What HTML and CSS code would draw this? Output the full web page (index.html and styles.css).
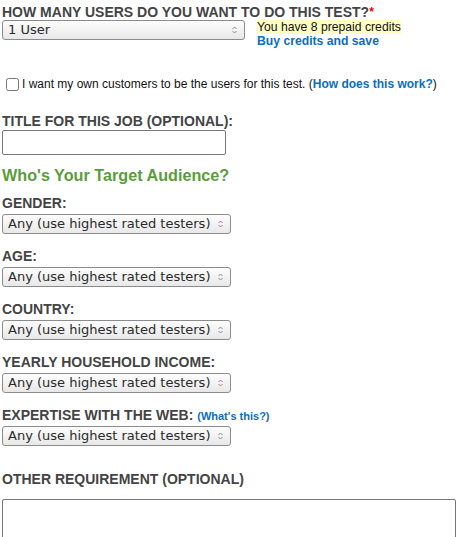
FILE: index.html
```html
<!DOCTYPE html>
<html>
<head>
<meta charset="utf-8">
<link rel="stylesheet" href="styles.css">
</head>
<body>
<div class="form">
  <div class="users-block">
    <div class="label">HOW MANY USERS DO YOU WANT TO DO THIS TEST?<span class="req">*</span></div>
    <div class="users-row">
      <select class="sel users-select"><option>1 User</option></select>
      <div class="credits">
        <span class="prepaid">You have 8 prepaid credits</span>
        <a class="buy" href="#">Buy credits and save</a>
      </div>
    </div>
  </div>

  <label class="own">
    <input type="checkbox" class="cb">
    <span>I want my own customers to be the users for this test. (<a class="link" href="#">How does this work?</a>)</span>
  </label>

  <div class="field title-field">
    <div class="label">TITLE FOR THIS JOB (OPTIONAL):</div>
    <input type="text" class="title-input">
  </div>

  <h2 class="audience">Who's Your Target Audience?</h2>

  <div class="field">
    <div class="label">GENDER:</div>
    <select class="sel aud"><option>Any (use highest rated testers)</option></select>
  </div>
  <div class="field">
    <div class="label">AGE:</div>
    <select class="sel aud"><option>Any (use highest rated testers)</option></select>
  </div>
  <div class="field">
    <div class="label">COUNTRY:</div>
    <select class="sel aud"><option>Any (use highest rated testers)</option></select>
  </div>
  <div class="field">
    <div class="label">YEARLY HOUSEHOLD INCOME:</div>
    <select class="sel aud"><option>Any (use highest rated testers)</option></select>
  </div>
  <div class="field">
    <div class="label">EXPERTISE WITH THE WEB: <a class="small-link" href="#">(What's this?)</a></div>
    <select class="sel aud"><option>Any (use highest rated testers)</option></select>
  </div>

  <div class="field other">
    <div class="label">OTHER REQUIREMENT (OPTIONAL)</div>
    <textarea class="other-text"></textarea>
  </div>
</div>
</body>
</html>
```

FILE: styles.css
```css
html, body {
  margin: 0;
  padding: 0;
  background: #fff;
}
body {
  font-family: "Liberation Sans", Arial, sans-serif;
  color: #222;
  overflow: hidden;
}
.form {
  padding: 4px 0 0 2px;
}
.label {
  font-weight: bold;
  font-size: 14px;
  line-height: 16px;
  color: #444;
}
.req {
  color: #e00;
  font-size: 12px;
  vertical-align: top;
}
.users-row {
  display: flex;
  align-items: flex-start;
  gap: 12px;
}
.sel {
  -webkit-appearance: none;
  appearance: none;
  display: block;
  box-sizing: border-box;
  height: 20px;
  margin: 0;
  padding: 0 20px 0 5px;
  font-family: "DejaVu Sans", sans-serif;
  font-size: 13px;
  line-height: 18px;
  color: #2a2a2a;
  border: 1px solid #8c8c8c;
  border-radius: 3px;
  background-color: #f2f2f2;
  background-image:
    url("data:image/svg+xml;utf8,<svg xmlns='http://www.w3.org/2000/svg' width='5' height='8' viewBox='0 0 5 8'><path d='M0.5 3 L2.5 1 L4.5 3 M0.5 5 L2.5 7 L4.5 5' fill='none' stroke='%23888' stroke-width='1'/></svg>"),
    linear-gradient(#fdfdfd, #e8e8e8);
  background-repeat: no-repeat, no-repeat;
  background-position: right 7px center, 0 0;
  background-size: 5px 8px, 100% 100%;
}
.users-select {
  width: 243px;
}
.aud {
  width: 229px;
}
.credits {
  display: flex;
  flex-direction: column;
  align-items: flex-start;
  font-size: 12.2px;
  line-height: 14px;
  margin-top: 0;
}
.prepaid {
  background: #ffffc4;
  color: #111;
}
.buy {
  color: #0a6fbf;
  font-weight: bold;
  text-decoration: none;
}
.own {
  display: flex;
  align-items: center;
  gap: 3px;
  margin-top: 29px;
  margin-left: 2px;
  font-size: 12px;
  color: #111;
}
.cb {
  margin: 0 0 0 2px;
  width: 13px;
  height: 13px;
}
.link {
  color: #0a6fbf;
  font-weight: bold;
  text-decoration: none;
}
.field {
  margin-bottom: 14px;
}
.field .label {
  margin-bottom: 3px;
}
.title-field {
  margin-top: 22px;
  margin-bottom: 0;
}
.title-field .label {
  margin-bottom: 1px;
}
.title-input {
  display: block;
  width: 224px;
  height: 25px;
  box-sizing: border-box;
  border: 1px solid #777;
  border-radius: 2px;
  margin: 0;
}
.audience {
  font-size: 16.2px;
  line-height: 18px;
  color: #5a9e3c;
  margin: 11px 0 11px 0;
}
.small-link {
  font-size: 11px;
  line-height: 1;
  color: #0a6fbf;
  text-decoration: none;
}
.other {
  margin-top: 25px;
}
.other .label {
  margin-bottom: 12px;
}
.other-text {
  display: block;
  width: 454px;
  height: 80px;
  box-sizing: border-box;
  border: 1px solid #777;
  border-radius: 2px;
  margin: 0;
}
```
